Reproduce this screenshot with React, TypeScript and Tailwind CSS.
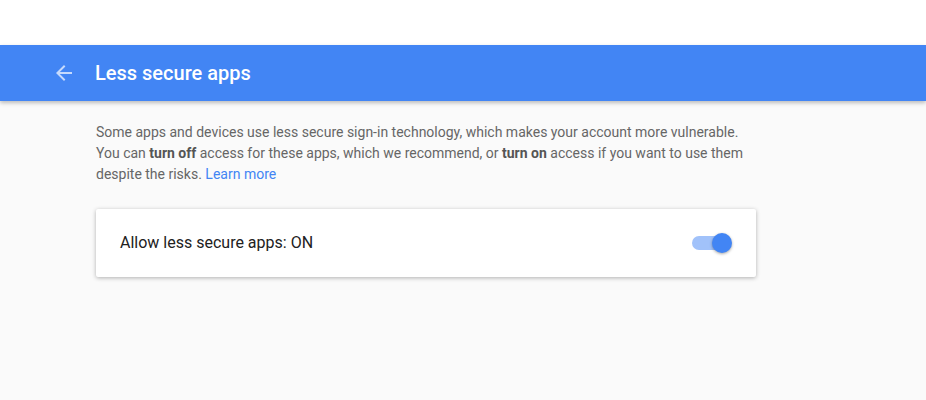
import React from "react"

export default function App() {
  return (
    <div className="w-[926px] h-[400px] bg-[#fafafa] overflow-hidden" style={{ fontFamily: "Roboto, 'Liberation Sans', sans-serif" }}>
      <div className="h-[45px] bg-white" />
      {/* HEADER */}
      <div className="relative h-[56px] bg-[#4285f4] flex items-center pl-[52px] shadow-[0_2px_4px_rgba(0,0,0,0.25)]">
        <svg width="24" height="24" viewBox="0 0 24 24" className="text-[#c6dafc]">
          <path d="M20 11H7.83l5.59-5.59L12 4l-8 8 8 8 1.41-1.41L7.83 13H20v-2z" fill="currentColor" />
        </svg>
        <h1 className="ml-[19px] text-[20px] font-medium text-white">Less secure apps</h1>
      </div>

      <div className="pl-[96px] pt-[21px] w-[756px]">
        <p className="text-[14px] leading-[21px] text-[#666]">
          Some apps and devices use less secure sign-in technology, which makes your account more vulnerable. You can{" "}
          <b className="font-bold text-[#555]">turn off</b> access for these apps, which we recommend, or{" "}
          <b className="font-bold text-[#555]">turn on</b> access if you want to use them despite the risks.{" "}
          <a className="text-[#4285f4]">Learn more</a>
        </p>

        {/* CARD */}
        <div className="mt-[24px] h-[68px] bg-white rounded-[2px] shadow-[0_1px_4px_rgba(0,0,0,0.3)] flex items-center justify-between pl-[24px] pr-[28px]">
          <span className="text-[16px] text-[#212121]">Allow less secure apps: ON</span>
          <div className="relative w-[36px] h-[14px] rounded-full bg-[#a1c2fa]">
            <div className="absolute right-[-4px] top-[-3px] w-[20px] h-[20px] rounded-full bg-[#4285f4] shadow-[0_1px_3px_rgba(0,0,0,0.35)]" />
          </div>
        </div>
      </div>
    </div>
  )
}
